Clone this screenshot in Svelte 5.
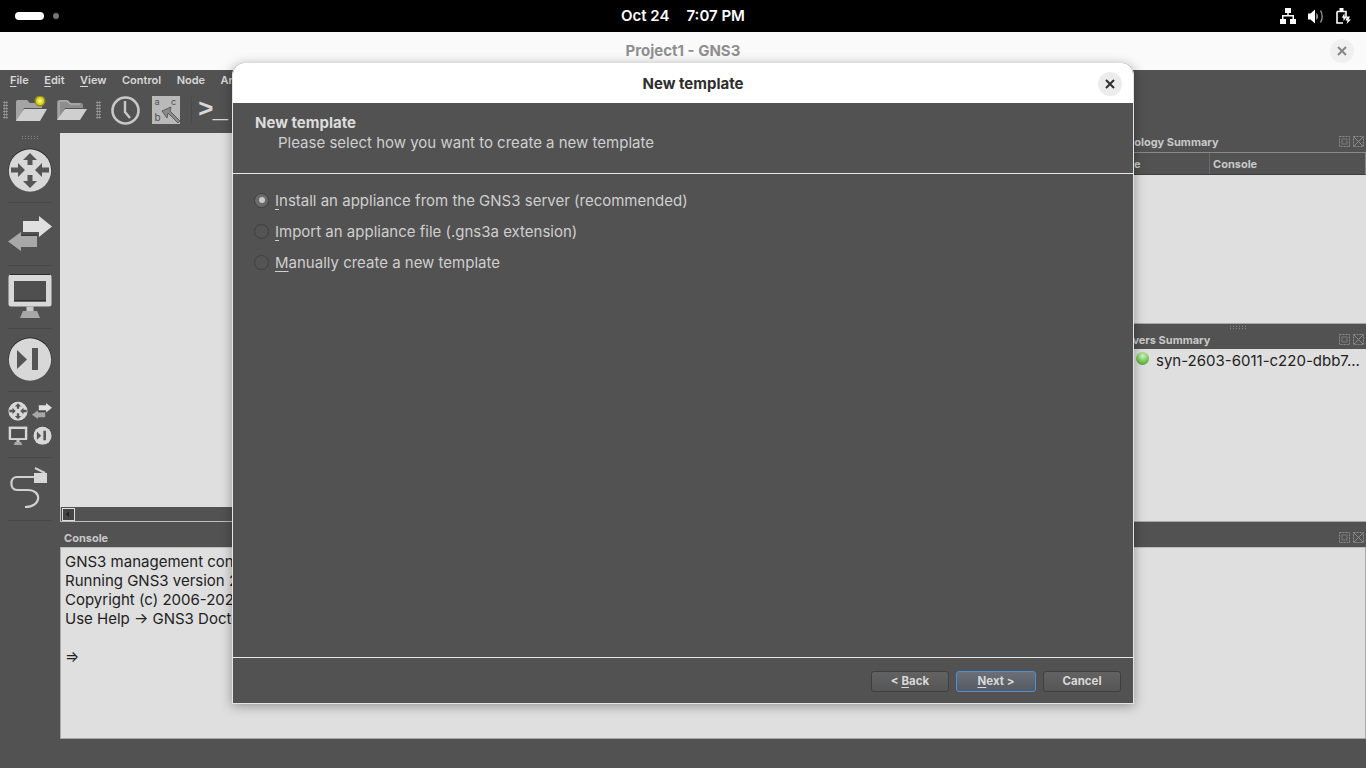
<script>
  const menus = [['F', 'ile'], ['E', 'dit'], ['V', 'iew'], ['', 'Control'], ['', 'Node'], ['', 'Annotate']];
  const consoleLines = [
    'GNS3 management console.',
    'Running GNS3 version 2.2.44 on Linux (64-bit).',
    'Copyright (c) 2006-2023 GNS3 Technologies.',
    'Use Help -> GNS3 Doctor to detect common issues.'
  ];
  const options = [
    { key: 'I', rest: 'nstall an appliance from the GNS3 server (recommended)', checked: true },
    { key: 'I', rest: 'mport an appliance file (.gns3a extension)', checked: false },
    { key: 'M', rest: 'anually create a new template', checked: false }
  ];
</script>

{#snippet routerIcon(size)}
  <svg width={size} height={size} viewBox="0 0 44 44">
    <circle cx="22" cy="22" r="21.500" fill="#1c1c1c"/>
    <circle cx="22" cy="22.500" r="21.200" fill="#d8d8d8"/>
    <g fill="#555">
      <path d="M19.500 17v-5H15l7-7 7 7h-4.500v5z"/>
      <path d="M19.500 27v6H15l7 7 7-7h-4.500v-6z"/>
      <path d="M3 19.500h7V15l7 7-7 7v-4.500H3z"/>
      <path d="M41 19.500h-7V15l-7 7 7 7v-4.500h7z"/>
    </g>
  </svg>
{/snippet}

{#snippet switchIcon(w, h, box)}
  <svg width={w} height={h} viewBox={box}>
    <path fill="#e0e0e0" d="M15 5h16V0l13 10.500L31 21v-5H15z"/>
    <path fill="#a8a8a8" d="M29 20H13v-4L0 25.500 13 35v-4h16z"/>
    <path fill="#3c3c3c" d="M13 20h16v-1.500H13z"/>
  </svg>
{/snippet}

{#snippet monitorIcon(w, h)}
  <svg width={w} height={h} viewBox="0 0 44 44">
    <rect x="0.500" y="0.500" width="43" height="32" rx="2.500" fill="#d8d8d8"/>
    <path d="M2 0.500h40" stroke="#2a2a2a"/>
    <rect x="6" y="7" width="32" height="20" fill="#4f4f4f"/>
    <path d="M6 27h32" stroke="#1e1e1e" stroke-width="1.200"/>
    <path d="M18.500 32.500h7V37h-7z" fill="#c8c8c8"/>
    <path d="M15 37h14l3 7H12z" fill="#a8a8a8"/>
  </svg>
{/snippet}

{#snippet stepIcon(size)}
  <svg width={size} height={size} viewBox="0 0 44 44">
    <circle cx="22" cy="22" r="21.500" fill="#1c1c1c"/>
    <circle cx="22" cy="22.500" r="21.200" fill="#d8d8d8"/>
    <path d="M9 13l10 9.500L9 32z" fill="#555"/>
    <rect x="24" y="11" width="6" height="22" fill="#555"/>
  </svg>
{/snippet}

{#snippet dockButtons()}
  <span class="dock-btns">
    <svg width="11" height="11" viewBox="0 0 11 11"><rect x=".5" y=".5" width="10" height="10" fill="none" stroke="#8c8c8c" stroke-dasharray="2 1"/><rect x="3" y="3" width="5" height="5" fill="none" stroke="#7a7a7a"/></svg>
    <svg width="11" height="11" viewBox="0 0 11 11"><rect x=".5" y=".5" width="10" height="10" fill="none" stroke="#8c8c8c" stroke-dasharray="2 1"/><path d="M1 1l9 9M10 1l-9 9" stroke="#8c8c8c"/></svg>
  </span>
{/snippet}

<div class="screen">
  <header class="topbar">
    <div class="workspaces"><span class="pill"></span><span class="dot"></span></div>
    <div class="clock"><span>Oct 24</span><span>7:07 PM</span></div>
    <div class="tray">
      <svg width="16" height="16" viewBox="0 0 16 16"><path fill="#fff" d="M5 0h6v5H8.700v2H14v4h2v5h-6v-5h2.500V8.500h-9V11H6v5H0v-5h2V7h5.300V5H5z"/></svg>
      <svg width="16" height="15" viewBox="0 0 16 15"><path fill="#fff" d="M0 4.500h2.500L7 .5v14l-4.500-4H0z"/><path fill="#fff" d="M8.500 4c1.500 1.500 1.500 5.500 0 7z"/><path fill="none" stroke="#9a9a9a" stroke-width="1.300" d="M12.500 1.500c2 3.500 2 8.500 0 12"/></svg>
      <svg width="15" height="16" viewBox="0 0 15 16"><path fill="none" stroke="#fff" stroke-width="1.600" d="M1 3.500h9v6M7 15H1V3.500"/><path fill="#fff" d="M3.500 0h4v3h-4z"/><path fill="#fff" d="M6 9.500L8.500 5v3.500H11L7.500 13v-3z"/><path fill="#fff" d="M11 8.500h3l-1.500 3H15L10.500 16l1-3.500H9.500z"/></svg>
    </div>
  </header>

  <div class="titlebar">
    <span>Project1 - GNS3</span>
    <button class="round" aria-label="Close">
      <svg width="10" height="10" viewBox="0 0 10 10"><path d="M1 1l8 8M9 1L1 9" stroke="#868686" stroke-width="2"/></svg>
    </button>
  </div>

  <nav class="menubar">
    {#each menus as m}
      <span><u>{m[0]}</u>{m[1]}</span>
    {/each}
  </nav>

  <div class="toolbar">
    <span class="grip v"></span>
    <svg class="tool new" width="31" height="26" viewBox="0 0 31 26">
      <path fill="#a4a4a4" d="M0 25V6q0-2 2-2h9l3 3h12v5H8L2 25z"/>
      <path fill="#d0d0d0" d="M8 13h23l-7 12H0z"/>
      <circle cx="24" cy="5" r="5.500" fill="#8f8a1e"/>
      <circle cx="24" cy="5" r="4" fill="#dcd62a"/>
      <circle cx="24" cy="5" r="2" fill="#f6f06a"/>
    </svg>
    <svg class="tool open" width="30" height="22" viewBox="0 0 30 22">
      <path fill="#8e8e8e" d="M0 21V3q0-2 2-2h9l3 3h10q2 0 2 2v3H8L2 21z"/>
      <path fill="none" stroke="#bdbdbd" d="M2 21V4q0-2 1-2h7l3 3h10"/>
      <path fill="#cfcfcf" d="M8 10h22l-7 11H0z"/>
    </svg>
    <span class="grip v second"></span>
    <svg class="tool clock-icon" width="29" height="29" viewBox="0 0 29 29">
      <circle cx="14.500" cy="14.500" r="13" fill="none" stroke="#c8c8c8" stroke-width="2.600"/>
      <path d="M14 5v11l5 6" fill="none" stroke="#c8c8c8" stroke-width="2.400"/>
    </svg>
    <svg class="tool abc" width="28" height="28" viewBox="0 0 28 28">
      <rect width="28" height="28" fill="#b9b9b9"/>
      <text x="2.500" y="9" font-size="9" font-family="Inter, sans-serif" fill="#505050">a</text>
      <text x="19" y="9" font-size="9" font-family="Inter, sans-serif" fill="#505050">c</text>
      <text x="2.500" y="25" font-size="10" font-family="Inter, sans-serif" fill="#505050">b</text>
      <path d="M10 15l9-4-1 4 10 10-2 2-10-10-1 5z" fill="#8a8a8a" stroke="#4a4a4a" stroke-width=".8"/>
    </svg>
    <span class="sep"></span>
    <span class="prompt">&gt;_</span>
  </div>

  <div class="workarea">
    <aside class="sidebar">
      <span class="grip h"></span>
      {@render routerIcon(44)}
      <span class="rule"></span>
      {@render switchIcon(44, 44, '0 -5 44 44')}
      <span class="rule"></span>
      {@render monitorIcon(44, 44)}
      <span class="rule"></span>
      {@render stepIcon(44)}
      <span class="rule"></span>
      <div class="mini">
        {@render routerIcon(20)}
        {@render switchIcon(20, 16, '0 0 44 35')}
        {@render monitorIcon(20, 19)}
        {@render stepIcon(19)}
      </div>
      <span class="rule"></span>
      <svg width="40" height="44" viewBox="0 0 40 44">
        <path d="M25 11H7c-7.500 0-7.500 13 0 13h11c14 0 14 17-3 17" fill="none" stroke="#d0d0d0" stroke-width="2.200"/>
        <rect x="24" y="7" width="13" height="10" fill="#d8d8d8"/>
        <path d="M25 2l10 5" stroke="#d0d0d0" stroke-width="2"/>
      </svg>
      <span class="rule"></span>
    </aside>

    <div class="center">
      <div class="upper">
        <section class="canvas-col">
          <div class="canvas"></div>
          <div class="hscroll"><span class="scroll-btn"><i></i></span></div>
        </section>
        <div class="docks">
          <section class="topology">
            <div class="dock-title">
              <span>Topology Summary</span>
              {@render dockButtons()}
            </div>
            <div class="columns"><span class="col-node">Node</span><span>Console</span></div>
            <div class="dock-body"></div>
          </section>
          <span class="grip h dock-grip"></span>
          <section class="servers">
            <div class="dock-title">
              <span>Servers Summary</span>
              {@render dockButtons()}
            </div>
            <div class="dock-body server-row"><span class="led"></span><span>syn-2603-6011-c220-dbb7...</span></div>
          </section>
        </div>
      </div>
      <section class="console">
        <div class="dock-title console-title">
          <span>Console</span>
          {@render dockButtons()}
        </div>
        <div class="console-body">
          {#each consoleLines as line}<div>{line}</div>{/each}
          <div>&nbsp;</div>
          <div>=&gt;</div>
        </div>
      </section>
    </div>
  </div>

  <div class="dialog">
    <div class="dialog-head">
      <span>New template</span>
      <button class="round dark" aria-label="Close">
        <svg width="10" height="10" viewBox="0 0 10 10"><path d="M1 1l8 8M9 1L1 9" stroke="#2e2e2e" stroke-width="2"/></svg>
      </button>
    </div>
    <div class="wizard-head">
      <h2>New template</h2>
      <p>Please select how you want to create a new template</p>
    </div>
    <div class="wizard-body">
      {#each options as o}
        <div class="option">
          <span class="radio" class:on={o.checked}></span>
          <span><u>{o.key}</u>{o.rest}</span>
        </div>
      {/each}
    </div>
    <div class="wizard-foot">
      <button class="btn">&lt; <u>B</u>ack</button>
      <button class="btn primary"><u>N</u>ext &gt;</button>
      <button class="btn">Cancel</button>
    </div>
  </div>
</div>

<style>
  :global(body) { margin: 0; background: #525252; }
  .screen {
    position: relative;
    width: 1366px;
    height: 768px;
    overflow: hidden;
    display: flex;
    flex-direction: column;
    font-family: Inter, "Liberation Sans", sans-serif;
    background: #525252;
  }
  u { text-underline-offset: 2px; }

  .topbar {
    height: 32px;
    box-sizing: border-box;
    flex: none;
    background: #000;
    color: #fff;
    display: grid;
    grid-template-columns: 1fr auto 1fr;
    align-items: center;
    font-size: 15px;
    font-weight: 600;
  }
  .workspaces { display: flex; align-items: center; gap: 9px; padding-left: 15px; }
  .pill { width: 29px; height: 8px; border-radius: 4px; background: #fff; }
  .dot { width: 6px; height: 6px; border-radius: 50%; background: #777; }
  .clock { display: flex; gap: 17px; padding-bottom: 2px; }
  .tray { display: flex; justify-content: flex-end; align-items: center; gap: 12px; padding-right: 15px; }

  .titlebar {
    height: 38px;
    box-sizing: border-box;
    padding-bottom: 2px;
    flex: none;
    background: #fafafa;
    position: relative;
    display: flex;
    align-items: center;
    justify-content: center;
    color: #8f8f8f;
    font-size: 15px;
    font-weight: 700;
  }
  .round {
    position: absolute;
    right: 12px;
    top: 7px;
    width: 24px;
    height: 24px;
    padding: 0;
    border: 0;
    border-radius: 50%;
    background: #f0f0f0;
    display: flex;
    align-items: center;
    justify-content: center;
  }

  .menubar {
    height: 22px;
    box-sizing: border-box;
    padding: 0 10px 2px;
    flex: none;
    display: flex;
    gap: 15.500px;
    align-items: center;
    color: #d8d8d8;
    font-size: 11px;
    font-weight: 600;
  }

  .toolbar {
    height: 36px;
    margin-bottom: 5px;
    flex: none;
    display: flex;
    align-items: center;
    padding-left: 3px;
  }
  .tool { flex: none; }
  .new { margin-left: 8px; margin-top: -2px; }
  .open { margin-left: 10px; }
  .clock-icon { margin-left: 10px; }
  .abc { margin-left: 12px; }
  .grip { display: block; flex: none; }
  .grip.v {
    width: 5px;
    height: 18px;
    background-image: radial-gradient(#9a9a9a 0.8px, transparent 1px);
    background-size: 2.500px 3px;
  }
  .grip.v.second { margin-left: 9px; }
  .grip.h {
    width: 18px;
    height: 5px;
    background-image: radial-gradient(#9a9a9a 0.8px, transparent 1px);
    background-size: 3px 2.500px;
  }
  .sep { width: 1px; height: 26px; background: #4a4a4a; margin-left: 11px; }
  .prompt {
    color: #d8d8d8;
    font: 700 26px "Liberation Mono", monospace;
    margin-left: 6px;
    line-height: 1;
    letter-spacing: -1px;
  }

  .workarea { flex: 1; display: flex; min-height: 0; }
  .sidebar {
    width: 60px;
    flex: none;
    display: flex;
    flex-direction: column;
    align-items: center;
    padding-top: 2px;
  }
  .sidebar > svg { flex: none; }
  .sidebar > .grip { margin-bottom: 8px; }
  .rule { width: 44px; height: 1px; background: #484848; margin: 10px 0 8px; flex: none; }
  .mini {
    display: grid;
    grid-template-columns: 20px 20px;
    gap: 5px 4px;
    align-items: center;
    justify-items: center;
    margin: 1px 0 2px;
  }

  .center { flex: 1; display: flex; flex-direction: column; min-width: 0; padding-bottom: 29px; }
  .upper { height: 389px; display: flex; flex: none; }
  .canvas-col { flex: 1; display: flex; flex-direction: column; }
  .canvas { flex: 1; background: #dfdfdf; }
  .hscroll {
    height: 15px;
    box-sizing: border-box;
    background: #525252;
    border-bottom: 1px solid #bdbdbd;
    border-left: 1px solid #bdbdbd;
    padding: 1px 0 0 1px;
  }
  .scroll-btn { display: block; width: 11px; height: 11px; border: 1px solid #ddd; background: #444; position: relative; }
  .scroll-btn i { position: absolute; left: 3px; top: 2px; border: 3px solid transparent; border-right-color: #222; border-left: 0; }

  .docks { width: 256px; flex: none; display: flex; flex-direction: column; }
  .dock-title {
    height: 19px;
    box-sizing: border-box;
    flex: none;
    display: flex;
    justify-content: space-between;
    align-items: center;
    color: #c8c8c8;
    font-size: 11px;
    font-weight: 700;
    padding-left: 4px;
  }
  .topology .dock-title { padding-bottom: 2px; }
  .console-title { padding-left: 4px; }
  .dock-btns { display: flex; gap: 3px; padding-right: 2px; }
  .topology { height: 191px; flex: none; display: flex; flex-direction: column; }
  .columns {
    height: 23px;
    flex: none;
    display: flex;
    border: 1px solid #8a8a8a;
    border-bottom: 1px solid #3e3e3e;
    box-sizing: border-box;
    color: #c8c8c8;
    font-size: 11px;
    font-weight: 700;
    align-items: center;
  }
  .col-node {
    width: 99px;
    box-sizing: border-box;
    border-right: 1px solid #6a6a6a;
    padding-left: 1px;
    height: 100%;
    display: flex;
    align-items: center;
    margin-right: 3px;
  }
  .dock-body { flex: 1; background: #dfdfdf; border-bottom: 1px solid #a8a8a8; }
  .dock-grip { margin: 1px auto 0; }
  .servers { flex: 1; display: flex; flex-direction: column; }
  .server-row {
    display: flex;
    gap: 7px;
    padding: 3px 0 0 26px;
    font-size: 15px;
    line-height: 18px;
    color: #222;
    align-items: flex-start;
    white-space: nowrap;
  }
  .led {
    width: 13px;
    height: 13px;
    border-radius: 50%;
    flex: none;
    background: radial-gradient(circle at 50% 30%, #d8f5c8, #6cc04a 60%, #4a8a34);
  }

  .console { flex: 1; display: flex; flex-direction: column; margin-top: 6px; }
  .console-body {
    flex: 1;
    background: #dfdfdf;
    border: 1px solid #a8a8a8;
    border-top-color: #bdbdbd;
    color: #222;
    font-size: 15px;
    line-height: 19px;
    padding: 4px 4px;
    white-space: nowrap;
    overflow: hidden;
  }

  .dialog {
    position: absolute;
    left: 232px;
    top: 63px;
    width: 902px;
    height: 641px;
    box-sizing: border-box;
    display: flex;
    flex-direction: column;
    background: #525252;
    border-radius: 12px 12px 0 0;
    border: 1px solid #e4e4e4;
    border-top: 0;
    box-shadow: 0 2px 12px rgba(0, 0, 0, 0.35);
    overflow: hidden;
  }
  .dialog-head {
    height: 40px;
    flex: none;
    background: #fff;
    position: relative;
    display: flex;
    align-items: center;
    justify-content: center;
    padding-left: 20px;
    color: #2e2e2e;
    font-size: 15px;
    font-weight: 700;
  }
  .dialog-head .round { right: 11px; top: 9px; background: #ececec; }
  .wizard-head {
    height: 71px;
    flex: none;
    box-sizing: border-box;
    border-bottom: 1px solid #e8e8e8;
    padding: 10px 22px 0;
    color: #dcdcdc;
  }
  .wizard-head h2 { margin: 0; font-size: 15px; line-height: 19px; font-weight: 700; }
  .wizard-head p { margin: 1px 0 0 23px; font-size: 15px; line-height: 20px; color: #cfcfcf; }
  .wizard-body {
    flex: 1;
    padding: 15px 21px 0;
    display: flex;
    flex-direction: column;
    gap: 9px;
    border-bottom: 1px solid #e8e8e8;
    color: #cfcfcf;
    font-size: 15px;
  }
  .wizard-body u { text-underline-offset: 3px; }
  .option { display: flex; align-items: center; gap: 6px; height: 22px; }
  .radio {
    width: 13px;
    height: 13px;
    border-radius: 50%;
    border: 1px solid #3f3f3f;
    background: #545454;
    box-sizing: content-box;
    position: relative;
    flex: none;
  }
  .radio.on { background: #6a6a6a; }
  .radio.on::after {
    content: "";
    position: absolute;
    left: 3.500px;
    top: 3.500px;
    width: 6px;
    height: 6px;
    border-radius: 50%;
    background: #c8c8c8;
  }
  .wizard-foot {
    height: 45px;
    flex: none;
    box-sizing: border-box;
    padding: 1px 12px 0 0;
    display: flex;
    justify-content: flex-end;
    align-items: center;
    gap: 7px;
  }
  .btn {
    width: 78px;
    height: 21px;
    padding: 0;
    box-sizing: border-box;
    border-radius: 3px;
    border: 1px solid #3f3f3f;
    background: linear-gradient(#626262, #565656);
    color: #d8d8d8;
    font: 700 11.500px Inter, "Liberation Sans", sans-serif;
  }
  .btn.primary { width: 80px; border-color: #4a90d9; background: linear-gradient(#6a6f78, #565a62); }
</style>
